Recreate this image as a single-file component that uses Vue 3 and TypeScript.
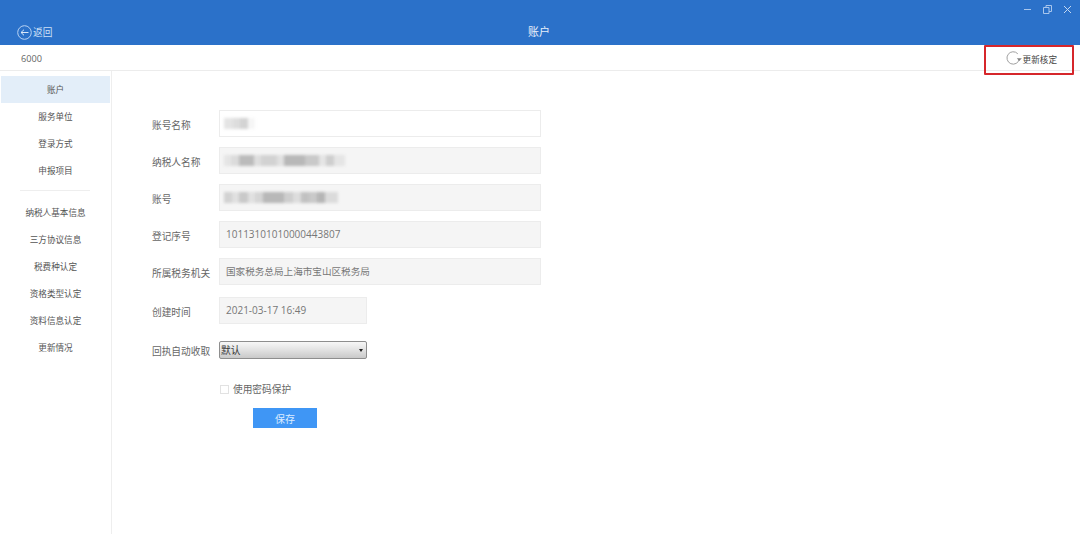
<script setup lang="ts">
const navTop: string[] = ['账户', '服务单位', '登录方式', '申报项目']
const navBottom: string[] = ['纳税人基本信息', '三方协议信息', '税费种认定', '资格类型认定', '资料信息认定', '更新情况']
interface Blur { w: number; o: number }
const nameBlur: Blur[] = [{ w: 9, o: 0.16 }, { w: 7, o: 0.2 }, { w: 8, o: 0.26 }, { w: 7, o: 0.05 }]
const taxBlur: Blur[] = [
  { w: 7, o: 0.1 }, { w: 8, o: 0.16 }, { w: 15, o: 0.36 }, { w: 7, o: 0.14 }, { w: 16, o: 0.22 }, { w: 7, o: 0.12 },
  { w: 21, o: 0.38 }, { w: 14, o: 0.28 }, { w: 7, o: 0.1 }, { w: 8, o: 0.24 }, { w: 11, o: 0.1 }
]
const acctBlur: Blur[] = [
  { w: 8, o: 0.22 }, { w: 7, o: 0.13 }, { w: 9, o: 0.28 }, { w: 7, o: 0.12 }, { w: 8, o: 0.2 }, { w: 21, o: 0.38 },
  { w: 9, o: 0.24 }, { w: 8, o: 0.15 }, { w: 8, o: 0.32 }, { w: 8, o: 0.28 }, { w: 8, o: 0.4 }, { w: 13, o: 0.16 }
]
</script>

<template>
  <div class="page">
    <header class="top">
      <div class="win">
        <svg width="9" height="9" viewBox="0 0 9 9"><path d="M1 4.500h7" stroke="#a9c6ec" fill="none" /></svg>
        <svg width="9" height="9" viewBox="0 0 9 9"><path d="M.5 2.500h5.500v6h-5.500zM3 2.500V.5h5.500v6H6" stroke="#a9c6ec" fill="none" /></svg>
        <svg width="9" height="9" viewBox="0 0 9 9"><path d="M1 1l7 7M8 1l-7 7" stroke="#c4d8f2" fill="none" /></svg>
      </div>
      <div class="back">
        <svg width="15" height="15" viewBox="0 0 15 15">
          <circle cx="7.500" cy="7.500" r="6.800" stroke="#b9d3f3" fill="none" />
          <path d="M11.500 7.500H4M7 4.700L4 7.500l3 2.800" stroke="#dbe8f8" fill="none" />
        </svg>
        <span>返回</span>
      </div>
      <div class="title">账户</div>
    </header>

    <div class="sub">
      <span class="code">6000</span>
      <div class="refresh">
        <svg width="16" height="15" viewBox="0 0 16 15">
          <path d="M11.800 2.800A6.200 6.200 0 1 0 13.300 8" stroke="#a0a0a0" stroke-width="1" fill="none" />
          <path d="M10.800 7.300h5l-2.500 2.800z" fill="#808080" />
        </svg>
        <span>更新核定</span>
      </div>
    </div>

    <div class="body">
      <aside class="side">
        <div v-for="(n, i) in navTop" :key="n" class="nav" :class="{ active: i === 0 }">{{ n }}</div>
        <div class="rule"></div>
        <div v-for="n in navBottom" :key="n" class="nav">{{ n }}</div>
      </aside>

      <main class="form">
        <div class="row">
          <label>账号名称</label>
          <div class="field plain">
            <span class="smear"><i v-for="(b, i) in nameBlur" :key="i" :style="{ width: b.w + 'px', opacity: b.o }"></i></span>
          </div>
        </div>
        <div class="row">
          <label>纳税人名称</label>
          <div class="field">
            <span class="smear"><i v-for="(b, i) in taxBlur" :key="i" :style="{ width: b.w + 'px', opacity: b.o }"></i></span>
          </div>
        </div>
        <div class="row">
          <label>账号</label>
          <div class="field">
            <span class="smear"><i v-for="(b, i) in acctBlur" :key="i" :style="{ width: b.w + 'px', opacity: b.o }"></i></span>
          </div>
        </div>
        <div class="row">
          <label>登记序号</label>
          <div class="field">10113101010000443807</div>
        </div>
        <div class="row">
          <label>所属税务机关</label>
          <div class="field cjk">国家税务总局上海市宝山区税务局</div>
        </div>
        <div class="row date-row">
          <label>创建时间</label>
          <div class="field short">2021-03-17 16:49</div>
        </div>
        <div class="row select-row">
          <label>回执自动收取</label>
          <div class="select-wrap">
            <select class="select"><option>默认</option></select>
            <span class="caret"></span>
          </div>
        </div>
        <div class="check">
          <span class="box"></span>
          <span>使用密码保护</span>
        </div>
        <button class="save" type="button">保存</button>
      </main>
    </div>
    <div class="mark"></div>
  </div>
</template>

<style>
html, body { margin: 0; background: #fff; }
</style>

<style scoped>
.page {
  position: relative;
  width: 1080px;
  height: 534px;
  overflow: hidden;
  background: #fff;
  font-family: "Noto Sans CJK SC", "Liberation Sans", sans-serif;
  color: #555;
  font-size: 10px;
}
.top {
  position: relative;
  height: 45px;
  background: #2b71c9;
  display: flex;
  align-items: flex-end;
  justify-content: center;
  padding-bottom: 6px;
  box-sizing: border-box;
}
.title { color: #e6effa; font-size: 11px; line-height: 15px; position: relative; left: -1px; }
.back {
  position: absolute;
  left: 17px;
  top: 25px;
  display: flex;
  align-items: center;
  gap: 1px;
  color: #cfe0f6;
  font-size: 9.700px;
  line-height: 15px;
}
.back svg { display: block; }
.win {
  position: absolute;
  top: 5px;
  right: 8px;
  display: flex;
  gap: 11px;
}
.win svg { display: block; }
.sub {
  height: 25px;
  border-bottom: 1px solid #ececec;
  display: flex;
  align-items: center;
  justify-content: space-between;
  padding: 0 23px 0 21px;
}
.code {
  font-family: "Open Sans", "Liberation Sans", sans-serif;
  font-size: 9.200px;
  color: #666;
  position: relative;
  top: 1px;
}
.refresh {
  display: flex;
  align-items: center;
  gap: 1px;
  color: #444;
  font-size: 8.600px;
  position: relative;
  top: 1px;
}
.refresh svg { display: block; }
.body { display: flex; height: 463px; }
.side {
  width: 110px;
  border-right: 1px solid #eeeeee;
  padding: 5px 0 0 1px;
}
.nav {
  height: 27px;
  line-height: 27px;
  text-align: center;
  font-size: 8.600px;
  color: #555;
  margin-right: 1px;
}
.nav.active { background: #e3eef9; }
.rule { height: 1px; background: #eeeeee; margin: 6px 21px 8px 19px; }
.form { padding: 39px 0 0 40px; }
.row {
  display: flex;
  align-items: center;
  height: 27px;
  margin-bottom: 10px;
}
.row label {
  width: 67px;
  font-size: 9.700px;
  color: #666;
  white-space: nowrap;
  position: relative;
  top: 1px;
}
.field {
  width: 322px;
  height: 27px;
  box-sizing: border-box;
  border: 1px solid #ececec;
  background: #f5f5f5;
  padding-left: 6px;
  line-height: 25px;
  font-size: 10px;
  color: #777;
  font-family: "Open Sans", "Noto Sans CJK SC", sans-serif;
  display: flex;
  align-items: center;
}
.field.cjk { font-size: 9.600px; }
.field.plain { background: #fff; }
.field.short { width: 148px; }
.smear { display: flex; height: 11px; filter: blur(1.600px); margin-left: -2px; }
.smear i { display: block; height: 11px; background: #555; }
.date-row { margin-top: 12px; }
.select-row { margin: 17px 0 0; height: 18px; }
.select-wrap { position: relative; width: 148px; height: 18px; }
.select {
  appearance: none;
  display: block;
  width: 148px;
  height: 18px;
  margin: 0;
  padding: 0 0 0 1px;
  box-sizing: border-box;
  border: 1px solid #8e8e8e;
  border-radius: 2px;
  background: linear-gradient(#f7f7f7, #e4e4e4 45%, #c9c9c9);
  font-family: inherit;
  font-size: 9.700px;
  color: #333;
}
.caret {
  position: absolute;
  right: 4px;
  top: 8px;
  width: 0;
  height: 0;
  border-left: 2.500px solid transparent;
  border-right: 2.500px solid transparent;
  border-top: 3px solid #222;
  pointer-events: none;
}
.check {
  display: flex;
  align-items: center;
  gap: 4px;
  margin: 21px 0 0 68px;
  height: 18px;
  font-size: 9.700px;
  color: #666;
}
.box {
  width: 9px;
  height: 9px;
  border: 1px solid #e2e2e2;
  box-sizing: border-box;
  background: #fff;
}
.save {
  display: block;
  width: 64px;
  height: 20px;
  margin: 10px 0 0 101px;
  padding: 0;
  border: 0;
  background: #3f96f5;
  color: #dcecff;
  font-family: inherit;
  font-size: 10px;
}
.mark {
  position: absolute;
  left: 984px;
  top: 45px;
  width: 90px;
  height: 30px;
  box-sizing: border-box;
  border: 2px solid #d6262b;
  border-radius: 1px;
  pointer-events: none;
}
</style>
